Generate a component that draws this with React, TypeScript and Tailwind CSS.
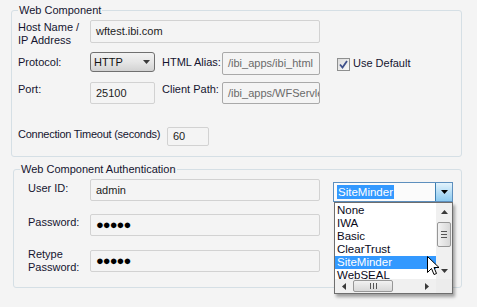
import React from 'react'

const label = 'text-[11px] leading-[13px] text-[#151530] whitespace-nowrap'
const field =
  'h-full border border-[#d2d2d2] rounded-[2px] pl-[5px] flex items-center text-[11px] text-[#1c1c1c] overflow-hidden whitespace-nowrap'
const dimField =
  'h-full border border-[#a9a9a9] rounded-[2px] pl-[5px] flex items-center text-[11px] text-[#6a6a6a] overflow-hidden whitespace-nowrap'

const options = ['None', 'IWA', 'Basic', 'ClearTrust', 'SiteMinder', 'WebSEAL']

function Dots() {
  return <span className="text-[13px] font-bold tracking-[-1px] text-black">●●●●●</span>
}

function Arrow({ dir }: { dir: 'up' | 'down' | 'left' | 'right' }) {
  const pts = {
    up: '0,4 3.5,0 7,4',
    down: '0,0 7,0 3.5,4',
    left: '4,0 4,7 0,3.5',
    right: '0,0 0,7 4,3.5',
  }[dir]
  const vertical = dir === 'up' || dir === 'down'
  return (
    <svg width={vertical ? 7 : 4} height={vertical ? 4 : 7}>
      <polygon points={pts} fill="#3a3a3a" />
    </svg>
  )
}

function App() {
  return (
    <div className="relative w-[477px] h-[307px] bg-[#f4f4f4] pt-[4px] font-['Liberation_Sans',Arial,sans-serif] overflow-hidden">
      {/* Web Component */}
      <fieldset className="ml-[11px] w-[451px] border border-[#d5dfe5] rounded-[3px] pl-[6px] pb-[10px]">
        <legend className="px-[1px] text-[11px] leading-[13px] text-[#151530]">Web Component</legend>

        <div className="flex items-start mt-[3px]">
          <div className={`${label} w-[72px] pt-[1px]`}>
            Host Name /
            <br />
            IP Address
          </div>
          <div className="w-[230px] h-[23px]">
            <div className={field}>wftest.ibi.com</div>
          </div>
        </div>

        <div className="flex items-start mt-[5px] h-[23px]">
          <div className={`${label} w-[72px] pt-[4px]`}>Protocol:</div>
          <div className="w-[65px] h-[20px] border border-[#707070] rounded-[3px] bg-gradient-to-b from-[#f2f2f2] via-[#e6e6e6] to-[#d2d2d2] flex items-center justify-between pl-[3px] pr-[4px] text-[11px] text-[#111]">
            <span>HTTP</span>
            <Arrow dir="down" />
          </div>
          <div className={`${label} ml-[7px] w-[60px] pt-[4px]`}>HTML Alias:</div>
          <div className="w-[98px] h-[23px]">
            <div className={dimField}>/ibi_apps/ibi_html</div>
          </div>
          <div className="ml-[17px] mt-[6px] w-[13px] h-[13px] border border-[#8e8f8f] bg-gradient-to-br from-[#dcdcdc] to-[#f8f8f8] flex items-center justify-center">
            <svg width="9" height="9" viewBox="0 0 9 9">
              <path d="M1 4.5 L3.5 7.5 L8 1" fill="none" stroke="#3d4f8a" strokeWidth="1.8" />
            </svg>
          </div>
          <div className={`${label} ml-[3px] pt-[5px]`}>Use Default</div>
        </div>

        <div className="flex items-start mt-[7px] h-[22px]">
          <div className={`${label} w-[72px] pt-[1px]`}>Port:</div>
          <div className="w-[65px] h-[22px]">
            <div className={field}>25100</div>
          </div>
          <div className={`${label} ml-[7px] w-[60px] pt-[1px]`}>Client Path:</div>
          <div className="w-[98px] h-[22px]">
            <div className={dimField}>/ibi_apps/WFServlet</div>
          </div>
        </div>

        <div className="flex items-start mt-[23px] h-[19px]">
          <div className={`${label} w-[149px] pt-[1px] tracking-[-0.25px]`}>Connection Timeout (seconds)</div>
          <div className="w-[42px] h-[19px]">
            <div className={field}>60</div>
          </div>
        </div>
      </fieldset>

      {/* Web Component Authentication */}
      <fieldset className="mt-[6px] ml-[13px] w-[449px] border border-[#d5dfe5] rounded-[3px] pl-[6px] pb-[13px]">
        <legend className="px-[1px] text-[11px] leading-[13px] text-[#151530]">Web Component Authentication</legend>

        <div className="flex items-start mt-[3px]">
          <div className={`${label} ml-[8px] w-[62px] pt-[3px]`}>User ID:</div>
          <div className="w-[230px] h-[22px]">
            <div className={field}>admin</div>
          </div>
          <div className="relative ml-[13px] mt-[3px] w-[120px] h-[20px] border border-[#5d8fbe] bg-[#fbfbfb] flex">
            <div className="flex-1 pl-[3px] pt-[2px] flex items-start">
              <span className="bg-[#3399ff] text-white text-[11.5px] leading-[14px] px-px">SiteMinder</span>
            </div>
            <div className="w-[17px] border-l border-[#3c7fb1] bg-gradient-to-b from-[#e3f3fc] via-[#b7def6] to-[#8ccbf1] flex items-center justify-center">
              <svg width="7" height="4">
                <polygon points="0,0 7,0 3.5,4" fill="#000" />
              </svg>
            </div>

            {/* open list */}
            <div className="absolute left-0 top-[19px] w-[119px] h-[92px] border border-[#6e6e6e] bg-white shadow-[2px_3px_3px_rgba(0,0,0,0.35)] flex flex-col z-10">
              <div className="flex h-[76px]">
                <div className="w-[101px] overflow-hidden pt-[1px]">
                  {options.map((o) => (
                    <div
                      key={o}
                      className={`h-[13px] leading-[13px] pl-[2px] text-[11.5px] ${
                        o === 'SiteMinder' ? 'bg-[#3399ff] text-white' : 'text-[#0a0a1a]'
                      }`}
                    >
                      {o}
                    </div>
                  ))}
                </div>
                <div className="w-[16px] bg-[#f0f0f0] flex flex-col items-center">
                  <div className="h-[17px] flex items-center">
                    <Arrow dir="up" />
                  </div>
                  <div className="mt-[2px] w-[14px] h-[25px] rounded-[2px] border border-[#979797] bg-gradient-to-r from-[#f2f2f2] to-[#d8d8d8] flex flex-col items-center justify-center gap-[2px]">
                    <div className="w-[6px] h-px bg-[#555]" />
                    <div className="w-[6px] h-px bg-[#555]" />
                    <div className="w-[6px] h-px bg-[#555]" />
                  </div>
                  <div className="flex-1 flex items-end pb-[6px]">
                    <Arrow dir="down" />
                  </div>
                </div>
              </div>
              <div className="flex h-[14px] bg-[#f0f0f0]">
                <div className="w-[101px] flex items-center">
                  <div className="w-[18px] flex justify-center">
                    <Arrow dir="left" />
                  </div>
                  <div className="w-[40px] h-[12px] rounded-[2px] border border-[#979797] bg-gradient-to-b from-[#f2f2f2] to-[#d8d8d8] flex items-center justify-center gap-[2px]">
                    <div className="w-px h-[6px] bg-[#555]" />
                    <div className="w-px h-[6px] bg-[#555]" />
                    <div className="w-px h-[6px] bg-[#555]" />
                  </div>
                  <div className="flex-1 flex justify-end pr-[7px]">
                    <Arrow dir="right" />
                  </div>
                </div>
                <div className="w-[16px] bg-[#ececec]" />
              </div>
            </div>
          </div>
        </div>

        <div className="flex items-start mt-[12px]">
          <div className={`${label} ml-[8px] w-[62px] pt-[2px]`}>Password:</div>
          <div className="w-[230px] h-[22px]">
            <div className={field}>
              <Dots />
            </div>
          </div>
        </div>

        <div className="flex items-center mt-[12px]">
          <div className={`${label} ml-[8px] w-[62px]`}>
            Retype
            <br />
            Password:
          </div>
          <div className="w-[230px] h-[22px]">
            <div className={field}>
              <Dots />
            </div>
          </div>
        </div>
      </fieldset>

      {/* mouse pointer */}
      <svg className="absolute left-[427px] top-[256px] z-20" width="14" height="22" viewBox="0 0 14 22">
        <path
          d="M0.5 0.5 L0.5 16.5 L4.5 12.5 L7 18.5 L9.5 17.5 L7 11.5 L12 11.5 Z"
          fill="#fff"
          stroke="#000"
          strokeWidth="1"
          strokeLinejoin="round"
        />
      </svg>
    </div>
  )
}

export default App
